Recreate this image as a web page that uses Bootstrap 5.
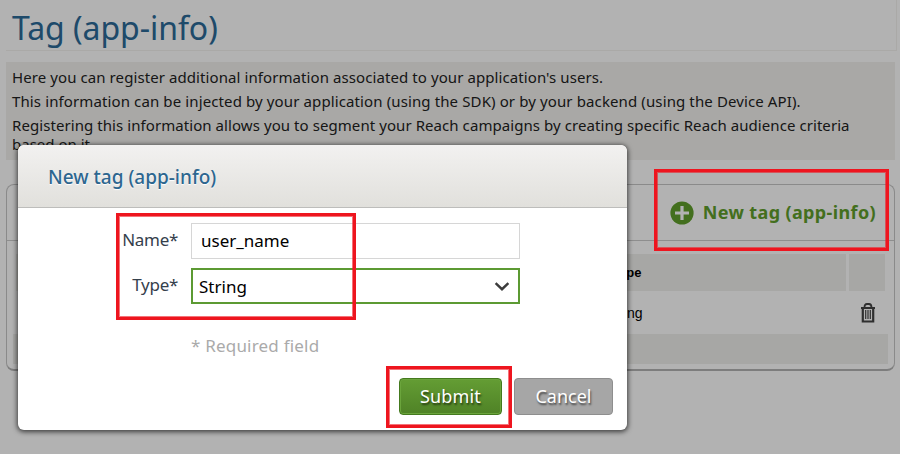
<!DOCTYPE html>
<html lang="en">
<head>
<meta charset="utf-8">
<meta name="viewport" content="width=device-width, initial-scale=1">
<title>Tag (app-info)</title>
<link href="https://cdn.jsdelivr.net/npm/bootstrap@5.3.0/dist/css/bootstrap.min.css" rel="stylesheet">
<style>
body{font-family:"Noto Sans","Open Sans",sans-serif;font-size:15px;color:#000;width:900px;height:454px;overflow:hidden;background:#fff}
.page-title{font-size:32px;line-height:42px;font-weight:400;color:#2c6a98;width:891px;height:51px;margin-left:6px;padding:7px 0 0 6px;border-bottom:1px solid #f4f3ef;border-right:1px solid #f4f3ef;letter-spacing:-.05px}
.info{background:#f2f1ee;width:889px;height:98px;margin:11px 0 0 6px;padding:6px;line-height:19px;color:#222}
.info p{margin:0 0 5px;white-space:nowrap}
.l1{letter-spacing:.085px}
.l2{letter-spacing:.117px}
.l3{letter-spacing:.07px}
.panel{width:889px;height:187px;margin:24px 0 0 6px;border:1px solid #c6c6c6;border-bottom:2px solid #b4b4b4;border-radius:8px}
.panel-top{height:56px;border-bottom:1px solid #ccc;padding-right:18px}
.add-link{font-size:18px;font-weight:700;color:#61a02c;text-decoration:none;gap:9px}
.add-text{letter-spacing:.37px}
.grid-box{font-family:"Liberation Sans",Arial,sans-serif;font-size:14px;margin:13px 8px 0 9px}
.grid-head{height:37px;gap:3px;margin-right:1px;font-weight:700;font-size:13px}
.grid-head>div{background:#f0efec}
.type-col{padding-left:596px}
.grid-row .type-col{padding:2px 0 0 590px}
.tool-col{width:36px}
.grid-row{height:43px;padding-right:11px}
.grid-foot{height:30px;background:#f0efec;margin-left:-3px;margin-right:-2px}
.shade{position:absolute;inset:0;background:rgba(0,0,0,.3)}
.dialog-box{position:absolute;left:18px;top:145px;width:609px;height:285px;border:0;border-radius:6px;background:#fff;box-shadow:0 1px 5px 1px rgba(0,0,0,.65);overflow:hidden}
.dialog-box .modal-header{height:63px;padding:2px 30px 0;background:linear-gradient(#f2f1f0,#e1e0dc);border-bottom:1px solid #bdbdbb;border-radius:6px 6px 0 0}
.dialog-box .modal-title{font-size:19px;font-weight:500;color:#2d668f;text-shadow:0 1px 1px #fff}
.dialog-box .modal-body{flex:none;padding:15px 0 0}
.field{height:36px;margin-bottom:9px}
.field label{width:160px;text-align:right;margin-right:13px;padding-bottom:3px;font-size:17px;letter-spacing:-.3px;color:#35404c}
.field .form-control,.field .form-select{width:329px;height:36px;border-radius:0;border:1px solid #d6d6d6;font-size:17px;color:#000;padding:0 9px 1px;background:#fff;box-shadow:none}
.field .pick{border:2px solid #5c9a33;padding:1px 8px 0 6px}
.req{margin:30px 0 0 173px;font-size:17px;line-height:24px;letter-spacing:.2px;color:#aaa}
.dialog-box .modal-footer{margin-top:auto;padding:0 14px 15px 0;border:0;gap:12px}
.dialog-box .btn{margin:0;height:37px;padding:0;border-radius:4px;font-size:18px;line-height:35px;color:#fff;text-shadow:1px 2px 2px rgba(0,0,0,.6)}
.dialog-box .ok{width:103px;background:linear-gradient(#649d34,#4f8226);border:1px solid #447a1e;box-shadow:inset 0 0 0 1px #6ba43c;letter-spacing:.15px}
.dialog-box .no{width:99px;background:#a6a6a6;border:1px solid #8e8e8e}
.callout{position:absolute;border:3px solid #ee151f;outline:1px solid rgba(238,21,31,.6);outline-offset:-4px}
.c1{left:116px;top:213px;width:240px;height:107px}
.c2{left:654px;top:169px;width:235px;height:82px}
.c3{left:386px;top:366px;width:126px;height:62px}
</style>
<script src="https://cdn.jsdelivr.net/npm/bootstrap@5.3.0/dist/js/bootstrap.bundle.min.js"></script>
</head>
<body class="position-relative">
<h1 class="page-title mb-0">Tag (app-info)</h1>
<div class="info">
  <p><span class="l1">Here you can register additional information associated to your application's users.</span></p>
  <p><span class="l2">This information can be injected by your application (using the SDK) or by your backend (using the Device API).</span></p>
  <p><span class="l3">Registering this information allows you to segment your Reach campaigns by creating specific Reach audience criteria</span><br>based on it.</p>
</div>
<section class="panel">
  <div class="panel-top d-flex justify-content-end align-items-center">
    <a href="#" class="add-link d-flex align-items-center">
      <svg width="24" height="24" viewBox="0 0 24 24"><circle cx="12" cy="12" r="11.6" fill="#61a02c"/><path d="M12 5v14M5 12h14" stroke="#fff" stroke-width="3.2"/></svg>
      <span class="add-text">New tag (app-info)</span>
    </a>
  </div>
  <div class="grid-box">
    <div class="grid-head d-flex">
      <div class="type-col flex-grow-1 d-flex align-items-center">Type</div>
      <div class="tool-col"></div>
    </div>
    <div class="grid-row d-flex align-items-center">
      <div class="type-col flex-grow-1">String</div>
      <svg width="14" height="20" viewBox="0 0 14 20" fill="none" stroke="#444"><path d="M3.500 4.500Q3.500 1 6 1h2q2.500 0 2.500 3.500" stroke-width="1.800"/><path d="M0 5h14" stroke-width="2"/><path d="M1.800 5v13.500h10.400V5" stroke-width="2.200"/><path d="M4.700 7v9M7 7v9M9.300 7v9" stroke-width="1.200"/></svg>
    </div>
    <div class="grid-foot"></div>
  </div>
</section>
<div class="shade"></div>
<div class="modal-content dialog-box" role="dialog">
  <div class="modal-header"><h2 class="modal-title">New tag (app-info)</h2></div>
  <div class="modal-body">
    <div class="field d-flex align-items-center"><label for="tagName">Name*</label><input id="tagName" class="form-control" type="text" value="user_name"></div>
    <div class="field d-flex align-items-center"><label>Type*</label>
      <div class="form-select pick d-flex align-items-center justify-content-between"><span>String</span>
        <svg width="16" height="11" viewBox="0 0 14 10"><path d="M1.200 2l5.800 5.500L12.800 2" fill="none" stroke="#3c3c3c" stroke-width="2.200"/></svg></div></div>
    <p class="req">* Required field</p>
  </div>
  <div class="modal-footer"><button class="btn ok" type="button">Submit</button><button class="btn no" type="button">Cancel</button></div>
</div>
<div class="callout c1"></div>
<div class="callout c2"></div>
<div class="callout c3"></div>
</body>
</html>
